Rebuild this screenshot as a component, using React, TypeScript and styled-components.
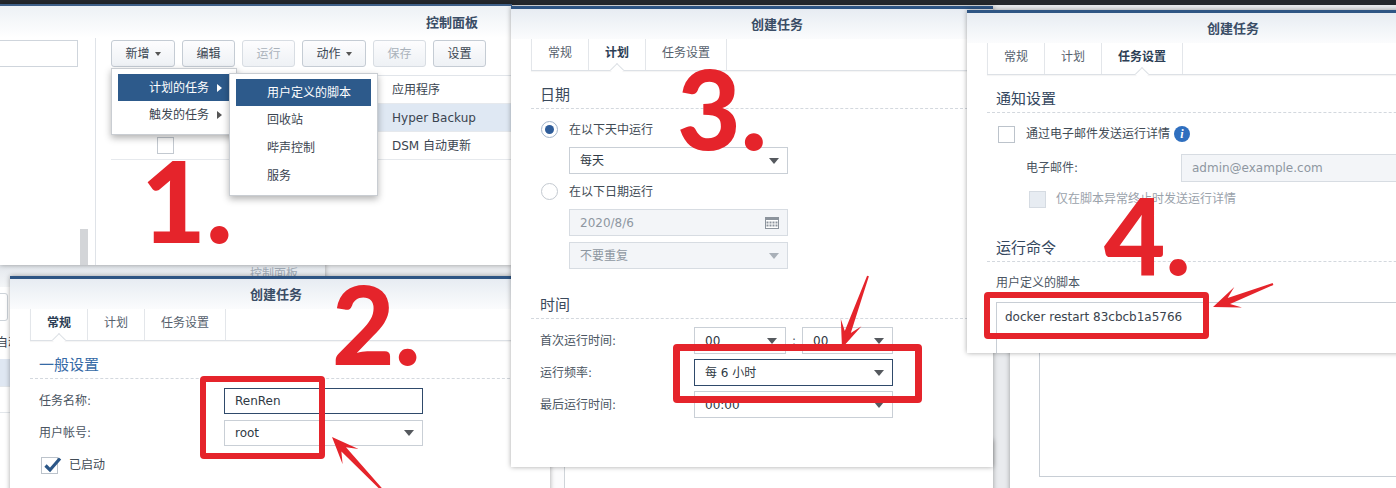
import React from "react";
import styled, { createGlobalStyle } from "styled-components";

const GlobalStyle = createGlobalStyle`
  html, body { margin: 0; padding: 0; background: #e9ebee; }
  body {
    font-family: "DejaVu Sans", "Noto Sans CJK SC", sans-serif;
    font-size: 12px;
    line-height: 16px;
    color: #414b55;
  }
  * { box-sizing: border-box; }
`;

const Stage = styled.div`
  position: relative;
  width: 1396px;
  height: 488px;
  overflow: hidden;
  background: linear-gradient(#24282d 0 5px, #e9ebee 5px);
`;

/* ---------- windows ---------- */

const Window = styled.section<{
  $x: number;
  $y: number;
  $w: number;
  $h: number;
  $z: number;
  $bar?: number;
  $barColor?: string;
}>`
  position: absolute;
  left: ${(p) => p.$x}px;
  top: ${(p) => p.$y}px;
  width: ${(p) => p.$w}px;
  height: ${(p) => p.$h}px;
  z-index: ${(p) => p.$z};
  display: flex;
  flex-direction: column;
  background: #fff;
  border-top: ${(p) => p.$bar ?? 3}px solid ${(p) => p.$barColor ?? "#2e5584"};
  box-shadow: 0 0 5px rgba(0, 0, 0, 0.35);
  overflow: hidden;
`;

const DialogHead = styled.header`
  flex: none;
  height: 30px;
  display: flex;
  align-items: center;
  padding-left: 240px;
  font-family: "Noto Sans CJK SC", sans-serif;
  font-weight: 700;
  font-size: 13px;
  color: #3a4d66;
  background: linear-gradient(#e7ecf2, #fbfcfd);
`;

const TabBar = styled.nav`
  flex: none;
  display: flex;
  height: 32px;
  margin: 0 20px;
  border-bottom: 1px solid #dde1e6;
  box-shadow: 0 1px 1px rgba(0, 0, 0, 0.04);
`;

const Tab = styled.div<{ $active?: boolean }>`
  position: relative;
  display: flex;
  align-items: center;
  padding: 0 16px 3px;
  border-right: 1px solid #e3e6ea;
  color: ${(p) => (p.$active ? "#2c3e55" : "#56616d")};
  font-weight: ${(p) => (p.$active ? 700 : 400)};
  &:first-child {
    border-left: 1px solid #e3e6ea;
  }
  &::after {
    content: "";
    display: ${(p) => (p.$active ? "block" : "none")};
    position: absolute;
    left: 50%;
    bottom: -5px;
    width: 9px;
    height: 9px;
    margin-left: -5px;
    background: #fff;
    border-top: 1px solid #dde1e6;
    border-left: 1px solid #dde1e6;
    transform: rotate(45deg);
  }
`;

const DialogBody = styled.div`
  flex: 1;
  display: flex;
  flex-direction: column;
  padding: 0 20px;
`;

const SectionTitle = styled.h3<{ $top: number; $color?: string }>`
  margin: ${(p) => p.$top}px 0 0;
  padding: 0 0 4px 9px;
  font-family: "Noto Sans CJK SC", sans-serif;
  font-size: 15px;
  font-weight: 400;
  line-height: 20px;
  color: ${(p) => p.$color ?? "#3b4a5c"};
  border-bottom: 1px dashed #d3d8de;
`;

const Stack = styled.div<{ $gap: number; $top: number }>`
  display: flex;
  flex-direction: column;
  gap: ${(p) => p.$gap}px;
  margin-top: ${(p) => p.$top}px;
  padding-left: 9px;
`;

const Row = styled.div<{ $h?: number; $indent?: number; $top?: number }>`
  display: flex;
  align-items: center;
  height: ${(p) => p.$h ?? 27}px;
  padding-left: ${(p) => p.$indent ?? 0}px;
  margin-top: ${(p) => p.$top ?? 0}px;
  white-space: nowrap;
`;

const Label = styled.span<{ $w: number }>`
  flex: none;
  width: ${(p) => p.$w}px;
  color: #4a5562;
`;

const Field = styled.div<{
  $w: number;
  $h?: number;
  $focus?: boolean;
  $off?: boolean;
  $indent?: number;
}>`
  flex: none;
  width: ${(p) => p.$w}px;
  height: ${(p) => p.$h ?? 27}px;
  margin-left: ${(p) => p.$indent ?? 0}px;
  display: flex;
  align-items: center;
  padding: 0 8px 0 10px;
  border: 1px solid
    ${(p) => (p.$focus ? "#2f4a6b" : p.$off ? "#d7dce2" : "#c9cfd6")};
  background: ${(p) => (p.$off ? "#f3f5f8" : "#fff")};
  color: ${(p) => (p.$off ? "#8e97a1" : "#2f3944")};
  white-space: nowrap;
  overflow: hidden;
`;

const Caret = styled.span<{ $light?: boolean }>`
  margin-left: auto;
  width: 0;
  height: 0;
  border-left: 5px solid transparent;
  border-right: 5px solid transparent;
  border-top: 6px solid ${(p) => (p.$light ? "#a9b0b8" : "#55595e")};
`;

const Colon = styled.span`
  flex: none;
  width: 16px;
  text-align: center;
  color: #4a5562;
`;

const Box = styled.span<{ $off?: boolean; $indent?: number }>`
  position: relative;
  flex: none;
  width: 17px;
  height: 17px;
  margin-left: ${(p) => p.$indent ?? 2}px;
  margin-right: ${(p) => (p.$off ? 10 : 11)}px;
  border: 1px solid ${(p) => (p.$off ? "#d5dbe2" : "#bcc3cb")};
  background: ${(p) => (p.$off ? "#e7ecf2" : "#fff")};
  svg {
    position: absolute;
    left: 1px;
    top: -3px;
  }
`;

const Radio = styled.span<{ $on?: boolean }>`
  flex: none;
  width: 17px;
  height: 17px;
  margin: 0 11px 0 1px;
  border-radius: 50%;
  border: 1px solid ${(p) => (p.$on ? "#a3b5cb" : "#c3c9d0")};
  background: #fff;
  display: flex;
  align-items: center;
  justify-content: center;
  &::after {
    content: "";
    width: 9px;
    height: 9px;
    border-radius: 50%;
    background: ${(p) => (p.$on ? "#2f5d9a" : "transparent")};
  }
`;

const Muted = styled.span`
  color: #9aa2ab;
`;

const Info = styled.span`
  flex: none;
  width: 16px;
  height: 16px;
  margin-left: 4px;
  border-radius: 50%;
  background: #2f6fbf;
  color: #fff;
  font: italic 700 12px/16px "Liberation Serif", serif;
  text-align: center;
`;

const Caption = styled.div<{ $top: number }>`
  margin-top: ${(p) => p.$top}px;
  padding-left: 9px;
  line-height: 20px;
  color: #4a5562;
`;

const Script = styled.div`
  margin: 9px 0 0 9px;
  height: 120px;
  padding: 6px 8px;
  border: 1px solid #c8ced5;
  color: #3a434d;
  white-space: nowrap;
`;

/* ---------- control panel (window 1) ---------- */

const PanelHead = styled.header`
  flex: none;
  height: 32px;
  display: flex;
  align-items: center;
  justify-content: flex-end;
  padding-right: 34px;
  font-family: "Noto Sans CJK SC", sans-serif;
  font-weight: 700;
  font-size: 13px;
  color: #3a4d66;
  background: linear-gradient(#edf1f5, #ffffff);
`;

const PanelBody = styled.div`
  flex: 1;
  display: flex;
`;

const SidePane = styled.aside`
  flex: none;
  width: 96px;
  display: flex;
  flex-direction: column;
  padding-top: 2px;
  border-right: 1px solid #dfe3e8;
`;

const Search = styled.div`
  width: 78px;
  height: 27px;
  border: 1px solid #cfd5dc;
  border-left: none;
`;

const Thumb = styled.div`
  margin-top: auto;
  align-self: flex-end;
  width: 8px;
  height: 36px;
  margin-right: 7px;
  background: #d3d5d8;
`;

const MainPane = styled.div`
  flex: 1;
  display: flex;
  flex-direction: column;
  padding: 2px 0 0 15px;
`;

const Toolbar = styled.div`
  display: flex;
  gap: 7px;
`;

const ToolButton = styled.div<{ $off?: boolean }>`
  height: 27px;
  display: flex;
  align-items: center;
  gap: 5px;
  padding: 0 13.5px;
  border: 1px solid ${(p) => (p.$off ? "#d8dde3" : "#c5ccd4")};
  border-radius: 3px;
  background: linear-gradient(#fdfdfe, #eef1f5);
  color: ${(p) => (p.$off ? "#aab2bb" : "#3b4652")};
`;

const SmallCaret = styled.span`
  width: 0;
  height: 0;
  border-left: 3.5px solid transparent;
  border-right: 3.5px solid transparent;
  border-top: 4px solid #555;
`;

const Table = styled.div`
  margin-top: 8px;
  border-top: 1px solid #e1e5ea;
`;

const TRow = styled.div<{ $sel?: boolean }>`
  display: flex;
  align-items: center;
  height: 28px;
  border-bottom: 1px solid #e6e9ed;
  background: ${(p) => (p.$sel ? "#dfe8f3" : "#fff")};
`;

const TCell = styled.div<{ $w?: number }>`
  flex: ${(p) => (p.$w ? "none" : 1)};
  width: ${(p) => (p.$w ? `${p.$w}px` : "auto")};
  display: flex;
  justify-content: ${(p) => (p.$w ? "center" : "flex-start")};
  padding-left: ${(p) => (p.$w ? 0 : 8)}px;
  color: #3a4450;
  white-space: nowrap;
`;

const CellBox = styled.span`
  width: 17px;
  height: 17px;
  margin-left: 1px;
  border: 1px solid #c3c9d0;
  background: #fff;
`;

const Menu = styled.ul<{ $x: number; $y: number; $z: number }>`
  position: absolute;
  left: ${(p) => p.$x}px;
  top: ${(p) => p.$y}px;
  z-index: ${(p) => p.$z};
  margin: 0;
  padding: 5px 6px;
  list-style: none;
  background: #fff;
  border: 1px solid #c9cdd2;
  box-shadow: 0 3px 7px rgba(0, 0, 0, 0.3);
`;

const MenuItem = styled.li<{ $on?: boolean; $w: number; $h?: number }>`
  display: flex;
  align-items: center;
  width: ${(p) => p.$w}px;
  height: ${(p) => p.$h ?? 28}px;
  padding: 0 8px 0 31px;
  background: ${(p) => (p.$on ? "#2d5a8b" : "transparent")};
  color: ${(p) => (p.$on ? "#fff" : "#3a4450")};
  white-space: nowrap;
`;

const SubArrow = styled.span<{ $on?: boolean }>`
  margin-left: auto;
  width: 0;
  height: 0;
  border-top: 4px solid transparent;
  border-bottom: 4px solid transparent;
  border-left: 5px solid ${(p) => (p.$on ? "#fff" : "#555")};
`;

/* ---------- windows peeking from behind ---------- */

const GhostHead = styled.header`
  height: 22px;
  padding-left: 450px;
  font-family: "Noto Sans CJK SC", sans-serif;
  font-size: 12px;
  line-height: 16px;
  padding-top: 0;
  color: #a1abb6;
  background: linear-gradient(#e3e7ec, #f4f6f8);
`;

const GhostBody = styled.div`
  display: flex;
  flex-direction: column;
  padding-left: 150px;
`;

const GhostButton = styled.div`
  width: 58px;
  height: 28px;
  margin-top: 6px;
  border: 1px solid #cdd3d9;
  border-radius: 3px;
`;

const GhostText = styled.div`
  margin: 14px 0 0 46px;
  color: #3a4450;
`;

const GhostRow = styled.div`
  height: 28px;
  margin-top: 8px;
  background: #dfe7f2;
  border-bottom: 1px solid #e3e7eb;
`;

const GhostLine = styled.div`
  height: 26px;
  border-bottom: 1px solid #e3e7eb;
`;

const GhostSplit = styled.div`
  width: 48px;
  height: 100%;
  border-right: 1px solid #cfd4d9;
  background: #fbfbfc;
`;

const GhostArea = styled.div`
  margin: 20px 0 0 29px;
  height: 177px;
  border: 1px solid #c8ced5;
  border-right: none;
`;

/* ---------- annotations ---------- */

const Num = styled.div<{ $x: number; $y: number; $size: number }>`
  position: absolute;
  left: ${(p) => p.$x}px;
  top: ${(p) => p.$y}px;
  z-index: 20;
  font-family: "Lato", "Liberation Sans", sans-serif;
  font-weight: 900;
  font-size: ${(p) => p.$size}px;
  line-height: 1;
  color: #e5242b;
  white-space: nowrap;
`;

const Mark = styled.div<{ $x: number; $y: number; $w: number; $h: number; $t?: number }>`
  position: absolute;
  left: ${(p) => p.$x}px;
  top: ${(p) => p.$y}px;
  width: ${(p) => p.$w}px;
  height: ${(p) => p.$h}px;
  z-index: 20;
  border: ${(p) => p.$t ?? 6}px solid #e5242b;
  border-radius: 4px;
`;

const Arrows = styled.svg`
  position: absolute;
  left: 0;
  top: 0;
  z-index: 21;
  pointer-events: none;
`;

const arrow = (tx: number, ty: number, hx: number, hy: number) => {
  const dx = hx - tx;
  const dy = hy - ty;
  const len = Math.hypot(dx, dy);
  const ux = dx / len;
  const uy = dy / len;
  const px = -uy;
  const py = ux;
  const pt = (a: number, s: number) =>
    `${(tx + ux * a + px * s).toFixed(1)},${(ty + uy * a + py * s).toFixed(1)}`;
  return [
    pt(0, 1),
    pt(len - 17, 3.2),
    pt(len - 27, 11),
    pt(len, 0),
    pt(len - 27, -11),
    pt(len - 17, -3.2),
    pt(0, -1),
  ].join(" ");
};

const CheckMark = () => (
  <svg width="20" height="20" viewBox="0 0 20 20">
    <path d="M2.5 10.5 L7 15 L17 3.5" fill="none" stroke="#2b5687" strokeWidth="3.2" />
  </svg>
);

const Calendar = () => (
  <svg width="14" height="12" viewBox="0 0 14 12" style={{ marginLeft: "auto" }}>
    <rect x="0.5" y="0.5" width="13" height="11" fill="#fff" stroke="#8c949d" />
    <rect x="0.5" y="0.5" width="13" height="2.5" fill="#8c949d" />
    {[2, 5, 8, 11].map((x) =>
      [5, 8].map((y) => <rect key={`${x}-${y}`} x={x - 0.5} y={y - 0.5} width="2" height="2" fill="#8c949d" />)
    )}
  </svg>
);

const Tabs = ({ active }: { active: number }) => (
  <TabBar>
    {["常规", "计划", "任务设置"].map((t, i) => (
      <Tab key={t} $active={i === active}>
        {t}
      </Tab>
    ))}
  </TabBar>
);

const App = () => {
  return (
    <>
      <GlobalStyle />
      <Stage>
        {/* window behind, left */}
        <Window $x={-200} $y={262} $w={525} $h={240} $z={1} $barColor="#4a4e54">
          <GhostHead>控制面板</GhostHead>
          <GhostBody>
            <GhostButton />
            <GhostText>自动</GhostText>
            <GhostRow />
            <GhostLine />
          </GhostBody>
        </Window>

        {/* control panel */}
        <Window $x={0} $y={4} $w={512} $h={261} $z={2} $bar={2} $barColor="#3e5f88">
          <PanelHead>控制面板</PanelHead>
          <PanelBody>
            <SidePane>
              <Search />
              <Thumb />
            </SidePane>
            <MainPane>
              <Toolbar>
                <ToolButton>
                  新增 <SmallCaret />
                </ToolButton>
                <ToolButton>编辑</ToolButton>
                <ToolButton $off>运行</ToolButton>
                <ToolButton>
                  动作 <SmallCaret />
                </ToolButton>
                <ToolButton $off>保存</ToolButton>
                <ToolButton>设置</ToolButton>
              </Toolbar>
              <Table>
                <TRow>
                  <TCell $w={108} />
                  <TCell $w={165} />
                  <TCell>应用程序</TCell>
                </TRow>
                <TRow $sel>
                  <TCell $w={108} />
                  <TCell $w={165} />
                  <TCell>Hyper Backup</TCell>
                </TRow>
                <TRow>
                  <TCell $w={108}>
                    <CellBox />
                  </TCell>
                  <TCell $w={165} />
                  <TCell>DSM 自动更新</TCell>
                </TRow>
              </Table>
            </MainPane>
          </PanelBody>
          <Menu $x={111} $y={62} $z={3}>
            <MenuItem $on $w={112} $h={27}>
              计划的任务 <SubArrow $on />
            </MenuItem>
            <MenuItem $w={112}>
              触发的任务 <SubArrow />
            </MenuItem>
          </Menu>
          <Menu $x={229} $y={67} $z={4}>
            <MenuItem $on $w={135} $h={27}>
              用户定义的脚本
            </MenuItem>
            <MenuItem $w={135}>回收站</MenuItem>
            <MenuItem $w={135}>哔声控制</MenuItem>
            <MenuItem $w={135}>服务</MenuItem>
          </Menu>
        </Window>

        {/* window behind, under dialog 3 */}
        <Window $x={517} $y={440} $w={476} $h={60} $z={3} $bar={0}>
          <GhostSplit />
        </Window>

        {/* window behind, under dialog 4 */}
        <Window $x={1010} $y={280} $w={420} $h={260} $z={3} $bar={0}>
          <GhostArea />
        </Window>

        {/* dialog 2: general */}
        <Window $x={10} $y={276} $w={540} $h={240} $z={5}>
          <DialogHead>创建任务</DialogHead>
          <Tabs active={0} />
          <DialogBody>
            <SectionTitle $top={13} $color="#356aa6">
              一般设置
            </SectionTitle>
            <Stack $gap={6} $top={9}>
              <Row $h={26}>
                <Label $w={185}>任务名称:</Label>
                <Field $w={199} $h={26} $focus>
                  RenRen
                </Field>
              </Row>
              <Row $h={26}>
                <Label $w={185}>用户帐号:</Label>
                <Field $w={199} $h={26}>
                  root
                  <Caret />
                </Field>
              </Row>
              <Row $h={26}>
                <Box>
                  <CheckMark />
                </Box>
                已启动
              </Row>
            </Stack>
          </DialogBody>
        </Window>

        {/* dialog 3: schedule */}
        <Window $x={511} $y={6} $w={482} $h={461} $z={6}>
          <DialogHead>创建任务</DialogHead>
          <Tabs active={1} />
          <DialogBody>
            <SectionTitle $top={13}>日期</SectionTitle>
            <Stack $gap={6} $top={9}>
              <Row $h={23}>
                <Radio $on />
                在以下天中运行
              </Row>
              <Field $w={219} $indent={29}>
                每天
                <Caret />
              </Field>
              <Row $h={23}>
                <Radio />
                在以下日期运行
              </Row>
              <Field $w={219} $indent={29} $off>
                2020/8/6
                <Calendar />
              </Field>
              <Field $w={219} $indent={29} $off>
                不要重复
                <Caret $light />
              </Field>
            </Stack>
            <SectionTitle $top={25}>时间</SectionTitle>
            <Stack $gap={5} $top={8}>
              <Row>
                <Label $w={154}>首次运行时间:</Label>
                <Field $w={92}>
                  00
                  <Caret />
                </Field>
                <Colon>:</Colon>
                <Field $w={91}>
                  00
                  <Caret />
                </Field>
              </Row>
              <Row>
                <Label $w={154}>运行频率:</Label>
                <Field $w={199} $focus>
                  每 6 小时
                  <Caret />
                </Field>
              </Row>
              <Row>
                <Label $w={154}>最后运行时间:</Label>
                <Field $w={199}>
                  00:00
                  <Caret />
                </Field>
              </Row>
            </Stack>
          </DialogBody>
        </Window>

        {/* dialog 4: task settings */}
        <Window $x={967} $y={10} $w={520} $h={343} $z={7}>
          <DialogHead>创建任务</DialogHead>
          <Tabs active={2} />
          <DialogBody>
            <SectionTitle $top={13} $color="#34475e">
              通知设置
            </SectionTitle>
            <Stack $gap={0} $top={9}>
              <Row $h={24}>
                <Box />
                通过电子邮件发送运行详情
                <Info>i</Info>
              </Row>
              <Row $h={28} $top={8} $indent={30}>
                <Label $w={155}>电子邮件:</Label>
                <Field $w={300} $h={28} $off>
                  admin@example.com
                </Field>
              </Row>
              <Row $h={24} $top={5}>
                <Box $off $indent={33} />
                <Muted>仅在脚本异常终止时发送运行详情</Muted>
              </Row>
            </Stack>
            <SectionTitle $top={26} $color="#34475e">
              运行命令
            </SectionTitle>
            <Caption $top={11}>用户定义的脚本</Caption>
            <Script>docker restart 83cbcb1a5766</Script>
          </DialogBody>
        </Window>

        {/* annotations */}
        <Num $x={141} $y={144} $size={112}>
          1.
        </Num>
        <Num $x={332} $y={269} $size={108}>
          2.
        </Num>
        <Num $x={677} $y={52} $size={110}>
          3.
        </Num>
        <Num $x={1104} $y={181} $size={106}>
          4.
        </Num>
        <Mark $x={200} $y={376} $w={125} $h={83} />
        <Mark $x={673} $y={344} $w={249} $h={59} $t={7} />
        <Mark $x={984} $y={292} $w={225} $h={47} />
        <Arrows width={1396} height={488} viewBox="0 0 1396 488">
          <polygon points={arrow(384, 492, 332, 437)} fill="#e5242b" />
          <polygon points={arrow(868, 276, 842, 348)} fill="#e5242b" />
          <polygon points={arrow(1273, 284, 1213, 307)} fill="#e5242b" />
        </Arrows>
      </Stage>
    </>
  );
};

export default App;
